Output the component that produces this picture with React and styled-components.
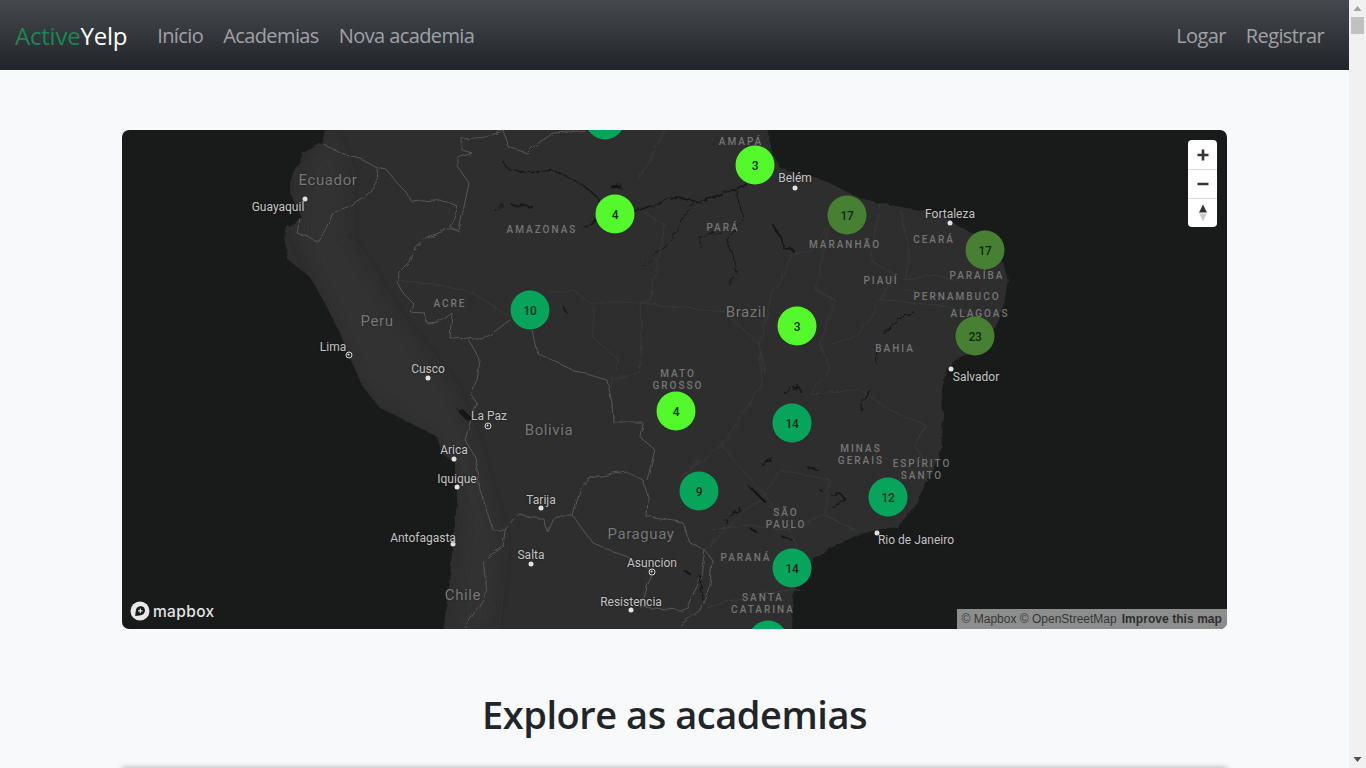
import React from 'react';
import styled, { createGlobalStyle } from 'styled-components';

const GlobalStyle = createGlobalStyle`
  html, body {
    margin: 0;
    height: 100%;
    overflow: hidden;
    background: #f8f9fa;
  }
  * { box-sizing: border-box; }
`;

const UI_FONT = `"Open Sans", "Noto Sans", "Liberation Sans", sans-serif`;
const MAP_FONT = `Roboto, "Liberation Sans", sans-serif`;

const Viewport = styled.div`
  display: flex;
  height: 100vh;
  overflow: hidden;
  font-family: ${UI_FONT};
`;
const Page = styled.div`
  flex: 1;
  min-width: 0;
  overflow: hidden;
`;

/* scrollbar */
const ScrollRail = styled.div`
  width: 17px;
  flex: none;
  background: #f1f1f1;
  display: flex;
  flex-direction: column;
  align-items: center;
  justify-content: space-between;
  position: relative;
`;
const ScrollArrow = styled.svg`
  display: block;
  width: 17px;
  height: 17px;
`;
const ScrollThumb = styled.div`
  position: absolute;
  top: 17px;
  left: 2px;
  width: 13px;
  height: 17px;
  background: #c1c1c1;
`;

/* navbar */
const Navbar = styled.nav`
  height: 70px;
  display: flex;
  align-items: center;
  padding: 0 15px;
  background: linear-gradient(180deg, #45484d 0%, #212529 100%);
`;
const Brand = styled.a`
  font-size: 24px;
  letter-spacing: -0.22px;
  color: #fff;
  margin-right: 20px;
`;
const BrandAccent = styled.span`
  color: #198754;
`;
const NavList = styled.div`
  display: flex;
  margin-left: ${p => (p.$right ? 'auto' : '0')};
`;
const NavLink = styled.a`
  font-size: 20px;
  letter-spacing: -0.6px;
  color: rgba(255, 255, 255, 0.55);
  padding: 0 10px;
`;

/* content */
const Main = styled.main`
  width: 1105px;
  margin: 60px auto 0;
`;
const Heading = styled.h1`
  margin: 59px 0 0;
  text-align: center;
  font-size: 38px;
  line-height: 52px;
  font-weight: 600;
  letter-spacing: -0.45px;
  color: #212529;
`;
const Card = styled.div`
  margin-top: 28px;
  height: 200px;
  background: #fff;
  box-shadow: 0 0 6px rgba(0, 0, 0, 0.35);
`;

/* map */
const MapBox = styled.div`
  position: relative;
  height: 499px;
  background: #191a1a;
  border-radius: 7px;
  overflow: hidden;
  font-family: ${MAP_FONT};
`;
const MapArt = styled.svg`
  display: block;
  width: 1105px;
  height: 499px;
`;
const Pin = styled.div.attrs(p => ({
  style: { left: p.$x - 122, top: p.$y - 130 },
}))`
  position: absolute;
  transform: translate(-50%, -50%);
  white-space: nowrap;
`;
const CountryLabel = styled(Pin)`
  font-size: 15px;
  letter-spacing: 0.6px;
  color: #777;
  text-shadow: 0 0 2px #222;
`;
const CityLabel = styled(Pin)`
  font-size: 12px;
  letter-spacing: 0;
  color: #c4c4c4;
  text-shadow: 0 0 2px #111;
`;
const StateLabel = styled(Pin)`
  font-size: 10px;
  font-weight: 500;
  line-height: 12px;
  letter-spacing: 2px;
  text-align: center;
  color: #767676;
`;
const CityDot = styled(Pin)`
  width: 5px;
  height: 5px;
  border-radius: 50%;
  background: #e2e2e2;
`;
const CapitalDot = styled(Pin)`
  width: 7px;
  height: 7px;
  border-radius: 50%;
  background: #2b2b2b;
  border: 1.5px solid #d8d8d8;
  &::after {
    content: '';
    display: block;
    width: 2px;
    height: 2px;
    margin: 0.5px;
    border-radius: 50%;
    background: #e2e2e2;
  }
`;

const CLUSTER_COLORS = {
  lime: '#53f92b',
  green: '#07a45c',
  olive: '#477f33',
};
const Cluster = styled(Pin)`
  width: 39px;
  height: 39px;
  border-radius: 50%;
  background: ${p => CLUSTER_COLORS[p.$tone]};
  display: flex;
  align-items: center;
  justify-content: center;
  font-size: 12px;
  font-weight: 500;
  letter-spacing: -0.2px;
  color: #0c2b12;
`;

/* map controls */
const Controls = styled.div`
  position: absolute;
  top: 10px;
  right: 10px;
  width: 29px;
  background: #fff;
  border-radius: 4px;
`;
const ControlButton = styled.div`
  height: 29px;
  display: flex;
  align-items: center;
  justify-content: center;
  & + & {
    border-top: 1px solid #ddd;
  }
`;
const Attribution = styled.div`
  position: absolute;
  right: 0;
  bottom: 0;
  height: 20px;
  display: flex;
  align-items: center;
  gap: 5px;
  padding: 0 5px;
  background: rgba(255, 255, 255, 0.5);
  border-bottom-right-radius: 7px;
  font-family: "Liberation Sans", Arial, sans-serif;
  font-size: 12px;
  color: rgba(0, 0, 0, 0.65);
`;
const AttributionStrong = styled.span`
  font-weight: 700;
  letter-spacing: 0.06px;
  color: rgba(0, 0, 0, 0.7);
`;
const Logo = styled.div`
  position: absolute;
  left: 8px;
  bottom: 8px;
  display: flex;
  align-items: center;
  gap: 3px;
  height: 20px;
`;
const LogoWord = styled.span`
  font-family: Inter, "Open Sans", sans-serif;
  font-size: 15.5px;
  font-weight: 500;
  letter-spacing: 0.35px;
  color: #e4e4e4;
`;

const LAND = 'M325 120 L325 130 L322 143 L303 153 L293 177 L290 193 L296 205 L302 218 L287 227 L285 240 L288 260 L310 277 L323 300 L337 327 L350 357 L363 387 L380 408 L410 423 L437 437 L442 453 L455 463 L458 493 L455 523 L452 553 L448 593 L442 640 L792 640 L793 597 L810 562 L833 547 L857 535 L877 530 L897 527 L910 513 L930 477 L942 447 L943 413 L942 390 L947 367 L960 357 L987 347 L1003 310 L1008 280 L1003 263 L987 240 L960 227 L940 213 L907 208 L873 202 L853 195 L830 183 L807 175 L780 168 L773 153 L770 137 L763 120 Z';

const COUNTRY_BORDERS = [
  'M322 143 L340 153 L360 158 L377 168 L378 180 L367 195 L347 207 L333 213 L325 230 L318 243 L308 237 L297 233 L300 218',
  'M377 168 L387 170 L397 183 L407 193 L412 202 L432 200 L447 202 L458 207 L450 227 L460 232',
  'M459 230 L469 183 L458 167 L458 158 L472 153 L462 150 L462 139 L487 137 L502 131',
  'M503 130 L508 147 L527 153 L533 147 L553 133 L570 132 L585 130',
  'M458 230 L447 230 L427 237 L415 247 L410 263 L400 273 L397 282 L403 293 L413 303 L410 312 L425 313 L427 323 L440 322 L452 313 L450 338 L467 337 L483 340 L510 320',
  'M467 337 L480 360 L477 380 L470 393 L477 403 L470 423 L465 440 L475 457 L480 490 L493 530 L505 530 L503 547 L483 560 L487 593 L478 607 L465 628',
  'M505 530 L518 513 L530 518 L543 518 L548 532 L555 516 L573 516',
  'M573 516 L580 490 L588 478 L627 472 L643 480 L648 497 L647 517 L682 522 L690 543 L705 550 L700 580 L687 607 L680 610 L640 607 L647 583 L652 573',
  'M573 516 L593 543 L627 557 L650 570',
  'M532 330 L537 353 L573 370 L607 380 L612 403 L613 422 L642 422 L640 437 L655 450 L647 480',
  'M705 550 L712 560 L710 585 L700 610 L680 625',
];
const STATE_BORDERS = [
  'M397 280 L440 285 L473 293 L510 317',
  'M550 293 L573 290 L590 303 L640 303 L725 312 L760 345 L765 372',
  'M593 307 L593 337 L618 360 L610 387',
  'M640 303 L642 345 L640 372 L612 380',
  'M640 180 L665 130',
  'M640 303 L650 300 L665 225 L640 210',
  'M792 255 L770 300 L760 345 L762 385 L735 425 L722 445 L742 470 L765 495 L745 510 L705 550',
  'M792 255 L810 250 L830 225 L850 205',
  'M830 225 L815 290 L835 300 L820 345 L830 368 L810 395',
  'M880 205 L870 260 L895 275 L880 300 L860 335 L828 345',
  'M900 210 L910 255 L905 280 L935 275 L960 282',
  'M905 290 L950 298 L985 300',
  'M880 300 L935 305 L985 315',
  'M810 395 L860 390 L890 410 L925 425 L915 445 L930 470',
  'M765 495 L780 470 L830 480 L825 515 L855 530',
  'M765 495 L790 530 L825 515',
  'M710 530 L750 525 L790 530 L805 565',
  'M700 610 L760 592 L805 590',
  'M722 445 L680 478 L700 460',
];
const RIVERS = [
  { d: 'M502 160 L507 168 L527 173 L553 170 L567 177 L583 185 L597 197 L603 207', w: 1.1 },
  { d: 'M583 227 L597 220 L612 215 L640 210 L673 197 L700 202 L737 188 L750 183', w: 1.4 },
  { d: 'M693 203 L673 237 L643 267', w: 1 },
  { d: 'M737 190 L740 210 L745 217 L727 240 L737 268 L728 285', w: 1 },
  { d: 'M700 247 L700 237 L720 232', w: 1 },
  { d: 'M773 225 L780 237 L783 248 L793 250', w: 1.8 },
  { d: 'M495 210 L503 205', w: 1 },
  { d: 'M512 205 L533 207', w: 1.4 },
  { d: 'M612 187 L620 186', w: 3 },
  { d: 'M563 306 L566 312', w: 1.5 },
  { d: 'M460 410 L468 418', w: 5 },
  { d: 'M883 333 L897 320 L913 312', w: 1.3 },
  { d: 'M875 347 L877 363', w: 1 },
  { d: 'M785 393 L797 385 L802 393', w: 1.8 },
  { d: 'M860 410 L868 390', w: 1.3 },
  { d: 'M763 465 L773 458', w: 1.6 },
  { d: 'M808 468 L818 470', w: 1.3 },
  { d: 'M750 487 L765 502', w: 1.8 },
  { d: 'M832 495 L840 493 L845 500 L833 507', w: 1.8 },
  { d: 'M725 523 L740 507', w: 1.3 },
  { d: 'M750 528 L758 533', w: 1.6 },
  { d: 'M783 538 L792 540', w: 1.3 },
  { d: 'M818 488 L823 492', w: 1.3 },
  { d: 'M700 575 L702 600', w: 1.3 },
  { d: 'M684 570 L690 574', w: 2.4 },
];

const COUNTRIES = [
  ['Ecuador', 328, 180], ['Peru', 377, 321], ['Bolivia', 549, 430],
  ['Brazil', 746, 312], ['Paraguay', 641, 534], ['Chile', 463, 595],
];
const CITIES = [
  ['Guayaquil', 278, 207], ['Lima', 333, 347], ['Cusco', 428, 369], ['La Paz', 489, 416],
  ['Arica', 454, 450], ['Iquique', 457, 479], ['Tarija', 541, 500], ['Antofagasta', 423, 538],
  ['Salta', 531, 555], ['Asuncion', 652, 563], ['Resistencia', 631, 602], ['Belém', 795, 178],
  ['Fortaleza', 950, 214], ['Salvador', 976, 377], ['Rio de Janeiro', 916, 540],
];
const DOTS = [
  [305, 199], [428, 378], [454, 459], [457, 487], [541, 508], [453, 544], [531, 564],
  [631, 610], [795, 188], [950, 223], [951, 369], [877, 533],
];
const CAPITALS = [[349, 355], [488, 426], [652, 572]];
const STATES = [
  ['AMAZONAS', 542, 230], ['ACRE', 450, 304], ['AMAPÁ', 741, 142], ['PARÁ', 723, 228],
  ['MARANHÃO', 845, 245], ['CEARÁ', 934, 240], ['PIAUÍ', 881, 281], ['PARAÍBA', 977, 276],
  ['PERNAMBUCO', 957, 297], ['ALAGOAS', 980, 314], ['BAHIA', 895, 349],
  ['MATO', 678, 374], ['GROSSO', 678, 386], ['MINAS', 861, 449], ['GERAIS', 861, 461],
  ['ESPÍRITO', 922, 464], ['SANTO', 922, 476], ['SÃO', 786, 513], ['PAULO', 786, 525],
  ['PARANÁ', 746, 558], ['SANTA', 763, 598], ['CATARINA', 763, 610],
];
const CLUSTERS = [
  ['', 605, 120, 'green'], ['3', 755, 165, 'lime'], ['4', 615, 214, 'lime'],
  ['17', 847, 215, 'olive'], ['17', 985, 250, 'olive'], ['10', 530, 310, 'green'],
  ['3', 797, 326, 'lime'], ['23', 975, 336, 'olive'], ['4', 676, 411, 'lime'],
  ['14', 792, 423, 'green'], ['9', 699, 491, 'green'], ['12', 888, 497, 'green'],
  ['14', 792, 568, 'green'], ['', 768, 640, 'green'],
];

const MapDrawing = () => (
  <MapArt viewBox="122 130 1105 499">
    <defs>
      <filter id="soft" x="-20%" y="-20%" width="140%" height="140%">
        <feGaussianBlur stdDeviation="7" />
      </filter>
      <filter id="rough" filterUnits="userSpaceOnUse" x="122" y="100" width="1105" height="560">
        <feTurbulence type="fractalNoise" baseFrequency="0.09" numOctaves="3" seed="4" />
        <feDisplacementMap in="SourceGraphic" scale="5" />
      </filter>
      <filter id="wiggle" filterUnits="userSpaceOnUse" x="122" y="100" width="1105" height="560">
        <feTurbulence type="fractalNoise" baseFrequency="0.14" numOctaves="3" seed="9" />
        <feDisplacementMap in="SourceGraphic" scale="7" />
      </filter>
      <clipPath id="landClip"><path d={LAND} /></clipPath>
    </defs>
    <path d={LAND} fill="#2e2d2d" filter="url(#rough)" />
    <g clipPath="url(#landClip)">
      <path
        d="M330 135 L305 170 L300 235 L325 290 L365 385 L445 445 L465 520 L455 630 L490 630 L500 540 L470 440 L450 390 L395 320 L345 240 L345 170 Z"
        fill="#313131"
        filter="url(#soft)"
      />
    </g>
    <g fill="none" stroke="#393939" strokeWidth="1" filter="url(#rough)">
      {STATE_BORDERS.map(d => <path key={d} d={d} />)}
    </g>
    <g fill="none" stroke="#575757" strokeWidth="1" filter="url(#rough)">
      {COUNTRY_BORDERS.map(d => <path key={d} d={d} />)}
    </g>
    <g fill="none" stroke="#141414" strokeLinecap="round" strokeLinejoin="round" filter="url(#wiggle)">
      {RIVERS.map(r => <path key={r.d} d={r.d} strokeWidth={r.w} />)}
    </g>
  </MapArt>
);

const MapboxMark = () => (
  <svg width="20" height="20" viewBox="0 0 20 20">
    <circle cx="10" cy="10" r="9.5" fill="#e8e8e8" />
    <path d="M5.2 15 C5.2 15 5.6 8.6 6.8 7 C8.6 4.6 12.4 4.6 14 6.6 C15.6 8.6 15.2 11.8 13.2 13.3 C11.2 14.8 8 14.6 5.2 15 Z" fill="#191a1a" />
    <path d="M10.3 7.6 V12 M8.1 9.8 H12.5" stroke="#e8e8e8" strokeWidth="1.2" />
  </svg>
);

const App = () => (
  <Viewport>
    <GlobalStyle />
    <Page>
      <Navbar>
        <Brand><BrandAccent>Active</BrandAccent>Yelp</Brand>
        <NavList>
          <NavLink>Início</NavLink>
          <NavLink>Academias</NavLink>
          <NavLink>Nova academia</NavLink>
        </NavList>
        <NavList $right>
          <NavLink>Logar</NavLink>
          <NavLink>Registrar</NavLink>
        </NavList>
      </Navbar>
      <Main>
        <MapBox>
          <MapDrawing />
          {COUNTRIES.map(([t, x, y]) => <CountryLabel key={t} $x={x} $y={y}>{t}</CountryLabel>)}
          {STATES.map(([t, x, y]) => <StateLabel key={t} $x={x} $y={y}>{t}</StateLabel>)}
          {DOTS.map(([x, y]) => <CityDot key={`${x}-${y}`} $x={x} $y={y} />)}
          {CAPITALS.map(([x, y]) => <CapitalDot key={`${x}-${y}`} $x={x} $y={y} />)}
          {CITIES.map(([t, x, y]) => <CityLabel key={t} $x={x} $y={y}>{t}</CityLabel>)}
          {CLUSTERS.map(([t, x, y, tone]) => (
            <Cluster key={`${x}-${y}`} $x={x} $y={y} $tone={tone}>{t}</Cluster>
          ))}
          <Controls>
            <ControlButton>
              <svg width="14" height="14" viewBox="0 0 14 14">
                <path d="M7 1.5 V12.5 M1.5 7 H12.5" stroke="#333" strokeWidth="2.6" />
              </svg>
            </ControlButton>
            <ControlButton>
              <svg width="14" height="14" viewBox="0 0 14 14">
                <path d="M1.5 7 H12.5" stroke="#333" strokeWidth="2.6" />
              </svg>
            </ControlButton>
            <ControlButton>
              <svg width="12" height="20" viewBox="0 0 12 20">
                <path d="M6 1.5 L10 9.5 H2 Z" fill="#333" />
                <path d="M6 18.5 L10 10.5 H2 Z" fill="#ccc" />
              </svg>
            </ControlButton>
          </Controls>
          <Logo>
            <MapboxMark />
            <LogoWord>mapbox</LogoWord>
          </Logo>
          <Attribution>
            <span>© Mapbox © OpenStreetMap</span>
            <AttributionStrong>Improve this map</AttributionStrong>
          </Attribution>
        </MapBox>
        <Heading>Explore as academias</Heading>
        <Card />
      </Main>
    </Page>
    <ScrollRail>
      <ScrollArrow viewBox="0 0 17 17"><path d="M4.5 11 L8.5 6 L12.5 11 Z" fill="#a3a3a3" /></ScrollArrow>
      <ScrollThumb />
      <ScrollArrow viewBox="0 0 17 17"><path d="M4.5 6 L8.5 11 L12.5 6 Z" fill="#505050" /></ScrollArrow>
    </ScrollRail>
  </Viewport>
);

export default App;
